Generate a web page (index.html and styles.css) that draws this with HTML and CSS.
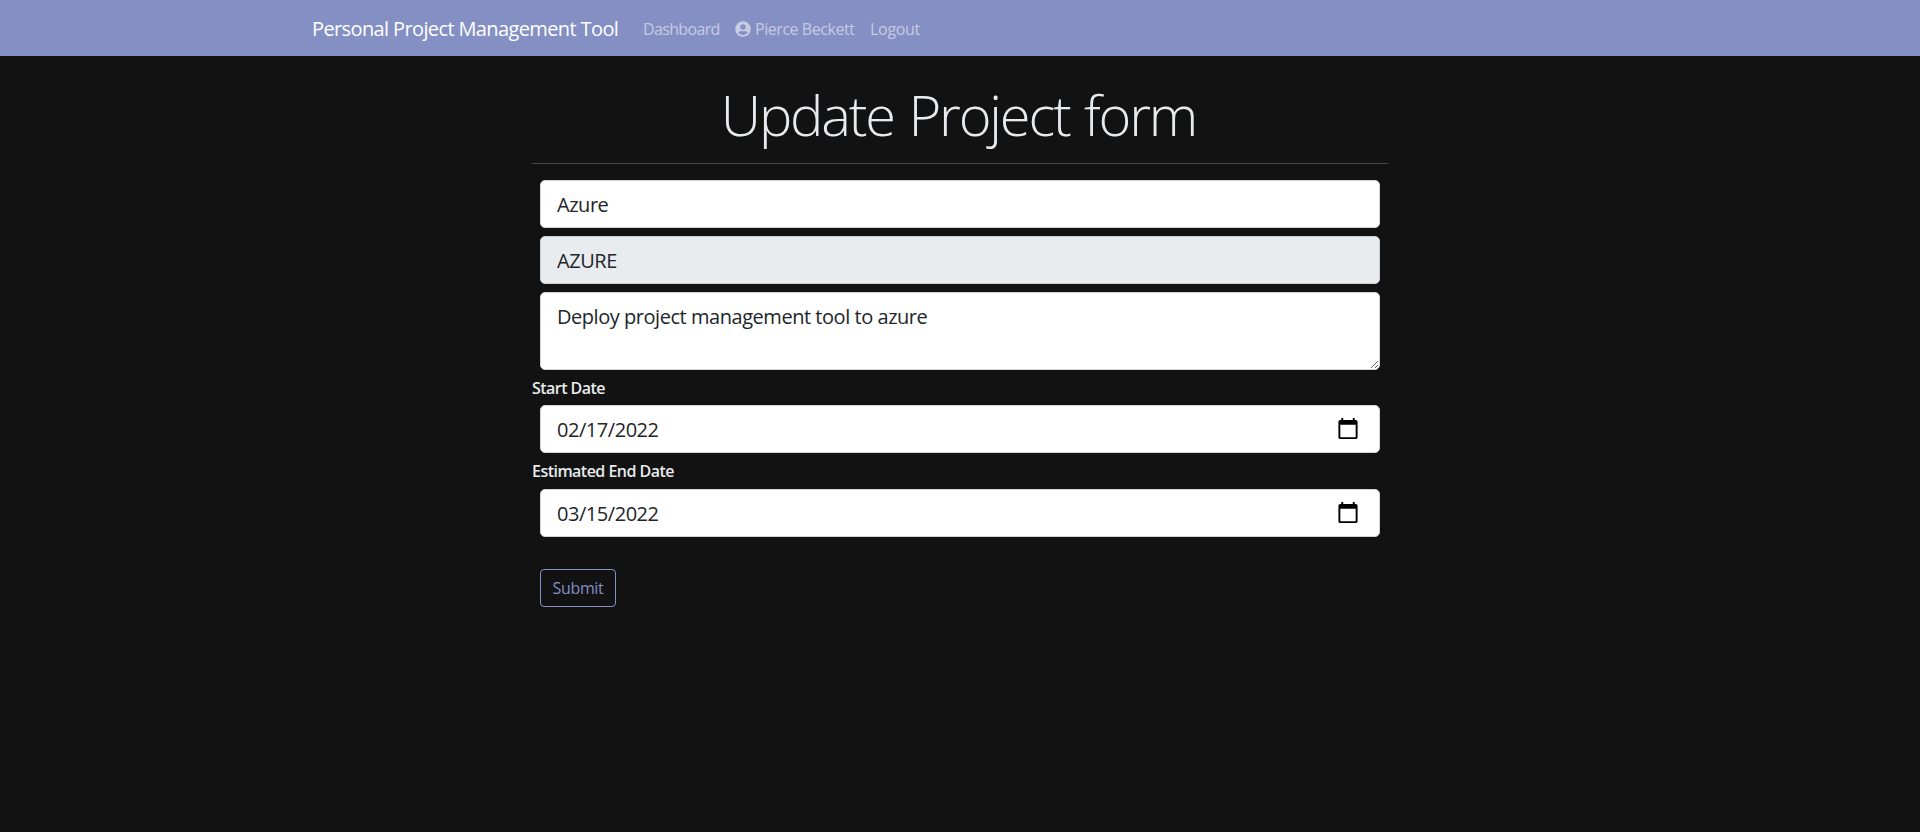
FILE: index.html
```html
<!DOCTYPE html>
<html lang="en">
<head>
<meta charset="utf-8">
<title>Personal Project Management Tool</title>
<link rel="stylesheet" href="styles.css">
</head>
<body>
<nav class="navbar">
  <div class="container">
    <a class="brand" href="#">Personal Project Management Tool</a>
    <a class="nav-link dashboard" href="#">Dashboard</a>
    <a class="nav-link user" href="#"><svg class="user-icon" viewBox="0 0 496 512" aria-hidden="true"><path fill="currentColor" d="M248 8C111 8 0 119 0 256s111 248 248 248 248-111 248-248S385 8 248 8zm0 96c48.600 0 88 39.400 88 88s-39.400 88-88 88-88-39.400-88-88 39.400-88 88-88zm0 344c-58.700 0-111.300-26.600-146.500-68.200 18.800-35.400 55.600-59.800 98.500-59.800 2.400 0 4.800.4 7.100 1.100 13 4.200 26.600 6.900 40.900 6.900s28-2.700 40.900-6.900c2.300-.7 4.700-1.100 7.100-1.100 42.900 0 79.700 24.400 98.500 59.800C359.300 421.400 306.700 448 248 448z"/></svg><span>Pierce Beckett</span></a>
    <a class="nav-link logout" href="#">Logout</a>
  </div>
</nav>
<main class="page">
  <h1 class="title">Update Project form</h1>
  <hr class="divider">
  <form class="form">
    <input class="control name" type="text" value="Azure" aria-label="Project name">
    <input class="control code" type="text" value="AZURE" disabled aria-label="Project identifier">
    <textarea class="control description" aria-label="Description">Deploy project management tool to azure</textarea>
    <h6 class="label start">Start Date</h6>
    <input class="control date" type="date" value="2022-02-17" aria-label="Start date">
    <h6 class="label end">Estimated End Date</h6>
    <input class="control date" type="date" value="2022-03-15" aria-label="Estimated end date">
    <button class="submit" type="button">Submit</button>
  </form>
</main>
</body>
</html>
```
FILE: styles.css
```css
* { box-sizing: border-box; }

body {
  margin: 0;
  min-height: 100vh;
  background: #121212;
  color: #e8ebee;
  font: 16px/1.5 "Segoe UI", "Open Sans", "Noto Sans", sans-serif;
}

.navbar { height: 56px; background: #848fc3; }

.container {
  display: flex;
  align-items: center;
  width: 1320px;
  height: 56px;
  margin: 0 auto;
  padding: 1px 12px 0;
}

.brand {
  width: 306px;
  margin-right: 25px;
  padding-top: 1px;
  color: #fff;
  font-size: 20px;
  letter-spacing: -0.62px;
  text-decoration: none;
  white-space: nowrap;
}

.nav-link {
  display: flex;
  align-items: center;
  padding-top: 1px;
  color: rgba(255, 255, 255, 0.55);
  text-decoration: none;
  white-space: nowrap;
  letter-spacing: -0.3px;
}

.dashboard { width: 77px; letter-spacing: -0.65px; }
.user { width: 120px; margin: 0 15px; gap: 4px; letter-spacing: -0.45px; }
.user-icon { flex: none; width: 16px; height: 16px; margin-top: -1px; }

.page { width: 856px; margin: 0 auto; padding-top: 24px; }

.title {
  margin: 0;
  padding: 1px 3px 0 0;
  font-size: 56px;
  font-weight: 300;
  line-height: 67px;
  letter-spacing: -2.15px;
  word-spacing: 2px;
  text-align: center;
  white-space: nowrap;
}

.divider {
  height: 1px;
  margin: 15px 0 16px;
  border: 0;
  background: #474849;
}

.form { display: flex; flex-direction: column; gap: 8px; }

.control {
  height: 48px;
  margin: 0 8px;
  padding: 8px 16px;
  border: 1px solid #ced4da;
  border-radius: 5px;
  background: #fff;
  color: #212529;
  font: 20px/30px "Segoe UI", "Open Sans", "Noto Sans", sans-serif;
  letter-spacing: -0.46px;
}

.code { background: #e9ecef; }
.description { display: block; height: 78px; padding-top: 9px; resize: vertical; }

.date { padding-top: 9px; padding-bottom: 7px; padding-right: 17px; }
.date::-webkit-datetime-edit-month-field,
.date::-webkit-datetime-edit-day-field,
.date::-webkit-datetime-edit-year-field { padding: 0; }
.date::-webkit-calendar-picker-indicator {
  width: 24px;
  height: 24px;
  margin-top: -2px;
}

.label {
  height: 19px;
  margin: 0;
  font-size: 16px;
  font-weight: 600;
  line-height: 21px;
  letter-spacing: -0.53px;
}

.end { height: 20px; }

.submit {
  width: 76px;
  height: 38px;
  margin: 24px 8px 0;
  padding: 6px 0;
  border: 1px solid #848fc3;
  border-radius: 4px;
  background: transparent;
  color: #848fc3;
  font: inherit;
  letter-spacing: -0.35px;
}
```
